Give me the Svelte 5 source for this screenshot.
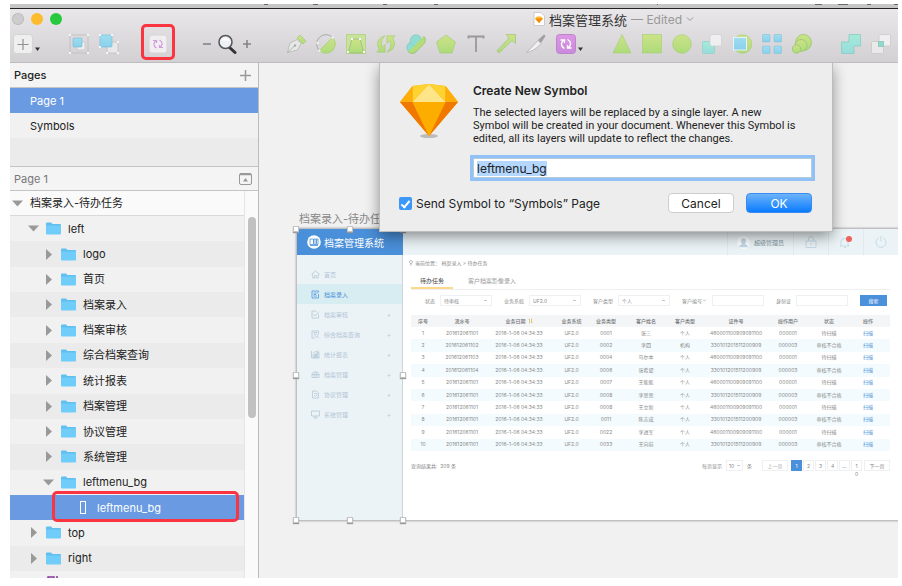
<script>
  import { onMount } from 'svelte';

  let nameInput;
  let symbolName = 'leftmenu_bg';
  let sendToPage = true;

  const layers = [
    { name: 'left', depth: 1, open: true },
    { name: 'logo', depth: 2 },
    { name: '首页', depth: 2 },
    { name: '档案录入', depth: 2 },
    { name: '档案审核', depth: 2 },
    { name: '综合档案查询', depth: 2 },
    { name: '统计报表', depth: 2 },
    { name: '档案管理', depth: 2 },
    { name: '协议管理', depth: 2 },
    { name: '系统管理', depth: 2 },
    { name: 'leftmenu_bg', depth: 2, open: true },
    { name: 'leftmenu_bg', depth: 3, shape: true },
    { name: 'top', depth: 1 },
    { name: 'right', depth: 1 }
  ];

  const menu = [
    { name: '首页', icon: 'M1 8.5 9 2l8 6.5M3.500 7.500V16h4v-5h3v5h4V7.500' },
    { name: '档案录入', icon: 'M15 8v8H2V2h13M5 6h6M5 9h5M5 12h7M12 7l4-5', active: true },
    { name: '档案审核', icon: 'M15 8v8H2V2h9M5 8l3 4 8-9', more: true },
    { name: '综合档案查询', icon: 'M15 8V2H2v14h6M5 5h7M5 8h3M11 8a3 3 0 1 0 .1 0M13 13l3 3', more: true },
    { name: '统计报表', icon: 'M1 2v14h16M4 16V9h3v7M9 16V7h2v9M13 16V5h3v11M4 6l5-3 3 1 4-3', more: true },
    { name: '档案管理', icon: 'M2 15V8l3-4h8l3 4v7zM2 9h14M6 6h6M6 9v3h6V9', more: true },
    { name: '协议管理', icon: 'M3 2h8l4 4v10H3zM6 7h6M6 10l3 3 4-5', more: true },
    { name: '系统管理', icon: 'M1 2h16v10H1zM9 12v4M5 16h8', more: true }
  ];

  const headers = ['序号', '流水号', '业务日期', '业务系统', '业务类型', '客户姓名', '客户类型', '证件号', '操作用户', '状态', '操作'];
  const widths = [24, 54, 60, 45, 24, 56, 22, 80, 24, 58, 32];
  const total = widths.reduce((a, b) => a + b, 0);

  const records = [
    ['201612061101', '0001', '张三', '个人'],
    ['201612061102', '0002', '李四', '机构'],
    ['201612061103', '0004', '马尔本', '个人'],
    ['201612061104', '0006', '张希望', '个人'],
    ['201612061101', '0007', '王能能', '个人'],
    ['201612061101', '0008', '李思思', '个人'],
    ['201612061101', '0008', '王立新', '个人'],
    ['201612061101', '0011', '陈志成', '个人'],
    ['201612061101', '0022', '李进军', '个人'],
    ['201612061101', '0033', '王向前', '个人']
  ];

  onMount(() => {
    nameInput.focus({ preventScroll: true });
    nameInput.select();
  });
</script>

<svg class="defs" width="0" height="0" aria-hidden="true">
  <defs>
    <linearGradient id="lime" x1="0" y1="0" x2="0" y2="1"><stop offset="0" stop-color="#cce388" /><stop offset="1" stop-color="#addb7a" /></linearGradient>
    <linearGradient id="teal" x1="0" y1="0" x2="0" y2="1"><stop offset="0" stop-color="#a5ead8" /><stop offset="1" stop-color="#98dcdc" /></linearGradient>
    <linearGradient id="sky" x1="0" y1="0" x2="0" y2="1"><stop offset="0" stop-color="#a0def0" /><stop offset="1" stop-color="#8acfec" /></linearGradient>
    <linearGradient id="violet" x1="0" y1="0" x2="0" y2="1"><stop offset="0" stop-color="#dd98e4" /><stop offset="1" stop-color="#c98adb" /></linearGradient>
    <clipPath id="lower-half"><path d="M20 0v20H0z" /></clipPath>
  </defs>
</svg>

<div class="screen">
  <div class="menubar">
    <svg width="888" height="4" viewBox="0 0 888 4" aria-hidden="true">
      <path fill="#444" d="M254 0h4v1h-4zM303 0h5v1h-5zM373 0h4v1h-4zM424 0h4v1h-4zM647 0h1v1h-1zM805 0h7v1h-7zM828 0h10v1h-10zM857 0h4v1h-4zM884 0h4v1h-4z" opacity=".7" />
    </svg>
  </div>

  <header class="chrome">
    <div class="titlebar">
      <div class="lights"><i></i><i class="amber"></i><i class="green"></i></div>
      <div class="title">
        <svg width="12" height="14" viewBox="0 0 12 14"><path d="M1 .5h7l3.500 3.500v9.500H1z" fill="#fff" stroke="#ccc" /><path d="M2 6.500 4 4.500h4l2 2L6 11z" fill="#fdb92c" /><path d="M2 6.500h8L6 11z" fill="#f38a0c" /></svg>
        <strong>档案管理系统</strong>
        <span class="edited">— Edited</span>
        <svg width="8" height="6" viewBox="0 0 8 6"><path d="M1 1.500 4 4.500 7 1.500" fill="none" stroke="#999" /></svg>
      </div>
    </div>

    <div class="toolbar">
      <div class="group tight">
        <button class="tool" aria-label="Insert"><svg viewBox="0 0 20 20"><rect x=".5" y=".5" width="19" height="19" rx="3" fill="#efefef" stroke="#d4d4d4" /><path d="M10 5v11M4.500 10.500h11" stroke="#909090" stroke-width="1.200" /></svg></button>
        <svg class="caret" viewBox="0 0 8 20"><path d="M2 13.500h5L4.500 17z" fill="#333" /></svg>
      </div>
      <div class="group select">
        <button class="tool" aria-label="Group"><svg viewBox="0 0 20 20"><rect x="1" y="1" width="18" height="18" fill="none" stroke="#c2c2c2" /><rect x="8" y="8" width="8" height="8" rx="1" fill="#eee" stroke="#ccc" /><rect x="4" y="4" width="9" height="9" rx="1" fill="url(#sky)" stroke="#73bcd6" stroke-width=".6" /><path d="M0 0h2v2H0zM18 0h2v2h-2zM0 18h2v2H0zM18 18h2v2h-2z" fill="#f6f6f6" /></svg></button>
        <button class="tool" aria-label="Ungroup"><svg viewBox="0 0 20 20"><rect x="8" y="8" width="11" height="11" rx="1" fill="#e8e8e8" stroke="#c6c6c6" /><rect x="1" y="1" width="12" height="12" rx="1" fill="url(#sky)" stroke="#73bcd6" stroke-width=".6" /><path d="M0 0h2v2H0zM12 0h2v2h-2zM0 12h2v2H0zM18 7h2v2h-2zM7 18h2v2H7zM18 18h2v2h-2z" fill="#f6f6f6" /></svg></button>
      </div>
      <div class="group symbol">
        <button class="tool" aria-label="Create Symbol"><svg viewBox="0 0 20 20"><rect x="1" y="1" width="18" height="18" rx="3" fill="#f0eef0" stroke="#d8d4d8" /><g fill="none" stroke="#d19bdd" stroke-width="1.200"><path d="M8.500 6.500C5 8.500 5 12 8.500 14M5 6.500h3.500V9M11.500 6C15 8 15 11.500 11.500 13.500M15 13.500h-3.500V11" /></g></svg></button>
        <span class="mark"></span>
      </div>
      <div class="group zoom">
        <svg class="small" viewBox="0 0 8 20"><path d="M0 10h8" stroke="#858585" stroke-width="1.600" /></svg>
        <button class="tool" aria-label="Zoom"><svg viewBox="0 0 20 20"><path d="m12 13 6 5.500" stroke="#333" stroke-width="3" stroke-linecap="round" /><circle cx="8.500" cy="8" r="6.500" fill="#edf0f5" stroke="#555" stroke-width="1.500" /><path d="M4 6.500a5 5 0 0 1 9 0z" fill="#fff" /></svg></button>
        <svg class="small" viewBox="0 0 8 20"><path d="M0 10h8M4 6v8" stroke="#858585" stroke-width="1.600" /></svg>
      </div>
      <div class="group draw">
        <button class="tool" aria-label="Vector"><svg viewBox="0 0 20 20"><path d="M1.500 18.500 4 9l7-3.500 4 4L11.500 16z" fill="#e6e8e6" stroke="#b4b8b4" stroke-width=".8" /><path d="m1.500 18.500 7-6.500" stroke="#a5a8a5" stroke-width=".8" /><circle cx="9" cy="11.500" r="1.200" fill="#aaa" /><path d="m11 4 3-3 6 6-3 3z" fill="url(#lime)" stroke="#9fc06e" stroke-width=".6" /></svg></button>
        <button class="tool" aria-label="Scissors"><svg viewBox="0 0 20 20"><path d="M3.400 16.600A9.300 9.300 0 0 1 16.600 3.400" fill="none" stroke="#aaa" /><path d="M3.400 16.600 16.600 3.400A9.300 9.300 0 0 1 3.400 16.600z" fill="url(#lime)" stroke="#9fc76f" stroke-width=".6" /><circle cx="3.400" cy="16.600" r="1.200" fill="#f4f4f4" /><circle cx="16.600" cy="3.400" r="1.200" fill="#f4f4f4" /><circle cx="1.500" cy="9" r="1.200" fill="#f4f4f4" /></svg></button>
        <button class="tool" aria-label="Transform"><svg viewBox="0 0 20 20"><rect x=".5" y=".5" width="19" height="19" fill="#c9e29c" stroke="#b5d58c" /><path d="M6 5h8l4 14H2z" fill="url(#lime)" stroke="#98b879" stroke-width=".7" /><path d="M5 4h2v2H5zM13 4h2v2h-2zM1 17h2v2H1zM17 17h2v2h-2z" fill="#f6f6f6" /></svg></button>
        <button class="tool" aria-label="Rotate"><svg viewBox="0 0 22 19"><path d="M10 .5C3 2 -1 9 3.500 15.500L1 18.500h9V10l-3 3C5 8.500 6 4 10 .5zM12 18.500c7-1.500 11-8.500 6.500-15L21 .5h-9V9l3-3c2 4.500 1 9-3 12.500z" fill="url(#lime)" stroke="#9fc76f" stroke-width=".6" /></svg></button>
        <button class="tool" aria-label="Flatten"><svg viewBox="0 0 20 20"><g fill="#8fdcd2" stroke="#79c3bb" stroke-width=".6"><circle cx="6.500" cy="13.500" r="5.700" /><circle cx="10" cy="6.500" r="5.700" /></g><circle cx="10" cy="7" r="5.200" fill="#8fdcd2" /><g clip-path="url(#lower-half)"><path d="M7 19 19.500 6.500" stroke="#98c872" stroke-width="0" /><rect x="-1" y="4.500" width="22" height="11" rx="5.500" fill="#b5dc78" stroke="#92c270" stroke-width=".7" transform="rotate(-45 10 10)" /></g></svg></button>
        <button class="tool" aria-label="Polygon"><svg viewBox="0 0 20 20"><path d="m10 1 9.500 7-3.500 11H4L.5 8z" fill="url(#lime)" stroke="#9fc76f" stroke-width=".6" /></svg></button>
        <button class="tool" aria-label="Text"><svg viewBox="0 0 20 20"><path d="M2.500 4.500v-2h15v2M10 2.500V18" fill="none" stroke="#999" stroke-width="1.800" /></svg></button>
        <button class="tool" aria-label="Arrow"><svg viewBox="0 0 20 20"><path d="M19.500.5v9L16 6.500 3 19 .8 17 13 4 10 .5z" fill="url(#lime)" stroke="#9cbd77" stroke-width=".6" /></svg></button>
        <button class="tool" aria-label="Slice"><svg viewBox="0 0 20 20"><path d="M.5 18.500 12 6.500l3 3Q9 17 .5 18.500z" fill="#f0f0f0" stroke="#aaa" stroke-width=".7" /><path d="m12 6 6-5.500L19.500 2 15 9z" fill="#a0a0a0" /></svg></button>
        <button class="tool" aria-label="Symbols"><svg viewBox="0 0 20 20"><rect x=".5" y=".5" width="19" height="19" rx="3" fill="url(#violet)" stroke="#bf83cc" /><g fill="none" stroke="#fff" stroke-width="1.300"><path d="M8.500 6C4.500 8 4.500 12.500 8.500 14.500M4.500 6h4v3M11.500 5.500c4 2 4 6.500 0 8.500M15.500 14h-4v-3" /></g></svg></button>
      </div>
      <svg class="caret" viewBox="0 0 8 20"><path d="M2 13.500h5L4.500 17z" fill="#333" /></svg>
      <div class="group shapes">
        <button class="tool" aria-label="Triangle"><svg viewBox="0 0 20 20"><path d="m10 .5 9 18.500H1z" fill="url(#lime)" stroke="#a4cd76" stroke-width=".6" /></svg></button>
        <button class="tool" aria-label="Rectangle"><svg viewBox="0 0 20 20"><rect x=".5" y=".5" width="19" height="18.500" fill="url(#lime)" stroke="#a4cd76" stroke-width=".6" /></svg></button>
        <button class="tool" aria-label="Oval"><svg viewBox="0 0 20 20"><circle cx="10" cy="10" r="9.300" fill="url(#lime)" stroke="#a4cd76" stroke-width=".6" /></svg></button>
        <button class="tool" aria-label="Backward"><svg viewBox="0 0 20 20"><rect x=".5" y="7.500" width="12" height="12" rx="1" fill="url(#teal)" stroke="#8accc4" stroke-width=".6" /><rect x="8" y=".5" width="11.500" height="11.500" rx="2" fill="#efefef" stroke="#d2d2d2" stroke-width=".8" /></svg></button>
        <button class="tool" aria-label="Mask"><svg viewBox="0 0 20 20"><circle cx="10.500" cy="10" r="9.300" fill="url(#lime)" stroke="#a4cd76" stroke-width=".6" /><rect x="1.500" y="3.500" width="13" height="12.500" fill="url(#sky)" stroke="#e6f2f5" /></svg></button>
        <button class="tool" aria-label="Grid"><svg viewBox="0 0 20 20"><g fill="url(#sky)" stroke="#7fc1da" stroke-width=".6"><rect x=".5" y=".5" width="7.500" height="7.500" rx="1" /><rect x="12" y=".5" width="7.500" height="7.500" rx="1" /><rect x=".5" y="12" width="7.500" height="7.500" rx="1" /><rect x="12" y="12" width="7.500" height="7.500" rx="1" /></g></svg></button>
        <button class="tool" aria-label="Copies"><svg viewBox="0 0 20 20"><g fill="url(#lime)" stroke="#99c470" stroke-width=".8"><circle cx="11.500" cy="8.500" r="8" /><circle cx="9" cy="11.500" r="6" /><circle cx="4.500" cy="15" r="4.200" /></g></svg></button>
      </div>
      <div class="group boolean">
        <button class="tool" aria-label="Union"><svg viewBox="0 0 20 20"><path d="M8 .5h11.500V12H13v7.500H.5V8H8z" fill="url(#teal)" stroke="#82cabd" stroke-width=".7" /></svg></button>
        <button class="tool" aria-label="Intersect"><svg viewBox="0 0 20 20"><rect x=".5" y="7.500" width="12" height="12" rx="1" fill="#e9e9e9" stroke="#ccc" /><rect x="8" y=".5" width="11.500" height="11.500" rx="1" fill="#efefef" stroke="#d0d0d0" /><rect x="7.500" y="7.500" width="5" height="5" fill="#93d8cc" stroke="#7cc6b8" stroke-width=".7" /></svg></button>
      </div>
    </div>
  </header>

  <div class="work">
    <aside class="sidebar">
      <div class="pages-head"><span>Pages</span>
        <svg width="11" height="11" viewBox="0 0 11 11"><path d="M5.500 0v11M0 5.500h11" stroke="#999" stroke-width="1.500" /></svg>
      </div>
      <div class="page current">Page 1</div>
      <div class="page">Symbols</div>
      <div class="pages-rest"></div>
      <div class="layers-head"><span>Page 1</span>
        <svg width="13" height="12" viewBox="0 0 13 12"><rect x=".5" y=".5" width="12" height="11" rx="1.500" fill="none" stroke="#999" /><path d="M1 1.500h11" stroke="#999" stroke-width="1.500" /><path d="M6.500 5 9 8.500H4z" fill="#999" /></svg>
      </div>
      <div class="list">
        <div class="rows">
          <div class="row artboard-row">
            <svg class="arrow" viewBox="0 0 11 11"><path d="M0 2.500h11L5.500 8.500z" fill="#999" /></svg>
            <span>档案录入-待办任务</span>
          </div>
          {#each layers as layer}
            <div class="row d{layer.depth}" class:selected={layer.shape}>
              {#if layer.shape}
                <svg class="shape" viewBox="0 0 6 14"><rect x=".5" y=".5" width="5" height="12" fill="none" stroke="#fff" /></svg>
              {:else}
                <svg class="arrow" viewBox="0 0 11 11">
                  {#if layer.open}
                    <path d="M0 2.500h11L5.500 8.500z" fill="#999" />
                  {:else}
                    <path d="M3 0v11L9 5.500z" fill="#999" />
                  {/if}
                </svg>
                <svg class="folder" viewBox="0 0 15 13"><path d="M0 1.500Q0 .5 1 .5h4l1.500 1.500H14q1 0 1 1V12H0z" fill="#5fbfee" /><path d="M0 3.500h15v8q0 1-1 1H1q-1 0-1-1z" fill="#70cdf9" /></svg>
              {/if}
              <span>{layer.name}</span>
              {#if layer.shape}<i class="mark"></i>{/if}
            </div>
          {/each}
          <div class="row cut"><svg width="12" height="12" viewBox="0 0 12 12"><path d="M1 12V1h6v11M10 0v12" fill="none" stroke="#84399b" stroke-width="1.500" /></svg></div>
        </div>
        <div class="track"><div class="thumb"></div></div>
      </div>
    </aside>

    <main class="canvas">
      <div class="artboard-name">档案录入-待办任务</div>
      <div class="artboard">
        <nav class="leftmenu">
          <div class="logo">
            <svg width="14" height="14" viewBox="0 0 14 14"><circle cx="7" cy="7" r="6.800" fill="#fff" /><path d="M3 4h3.500v5.500H3zM7 4h2v5.500H7zM9.500 4H11v5.500H9.500zM3 10.500h8" fill="none" stroke="#4a90d9" stroke-width=".8" /></svg>
            <span>档案管理系统</span>
          </div>
          <div class="items">
            {#each menu as item}
              <a href="#menu" class:active={item.active}>
                <svg viewBox="0 0 18 18"><path d={item.icon} fill="none" stroke="currentColor" stroke-width="1.500" /></svg>
                <span>{item.name}</span>
                {#if item.more}<b>+</b>{/if}
              </a>
            {/each}
          </div>
          <div class="handles">
            <i class="t l"></i><i class="t c"></i><i class="t r"></i>
            <i class="m l"></i><i class="m r"></i>
            <i class="b l"></i><i class="b c"></i><i class="b r"></i>
          </div>
        </nav>

        <section class="content">
          <div class="topbar">
            <div class="user">
              <svg width="13" height="13" viewBox="0 0 14 14"><circle cx="7" cy="7" r="7" fill="#fbfdfe" /><path d="M7 2.500c4 0 2.500 5 1.500 6l3 2v1.500h-9v-1.500l3-2C4.500 7.500 3 2.500 7 2.500z" fill="#c3d9e9" /></svg>
              <span>超级管理员</span>
            </div>
            <div class="cell"><svg viewBox="0 0 12 12"><path d="M1 5h10v6.500H1zM3.500 5V3a2.500 2.500 0 0 1 5 0v2M6 7v2.500" fill="none" stroke="#c5d9e6" /></svg></div>
            <div class="cell"><svg viewBox="0 0 12 12"><path d="M0 10h9L8 8.500V6a3.500 3.500 0 0 0-7 0v2.500zM4 11.500h2" fill="none" stroke="#c5d9e6" /><circle cx="9" cy="3" r="3" fill="#f0605c" /></svg></div>
            <div class="cell"><svg viewBox="0 0 12 12"><path d="M3.500 2a5 5 0 1 0 5 0M6 0v5.500" fill="none" stroke="#c5d9e6" /></svg></div>
          </div>

          <div class="page-body">
            <div class="crumb">
              <svg width="4" height="6" viewBox="0 0 8 12"><path d="M4 1a3 3 0 1 0 .1 0M4 7v4" fill="none" stroke="#999" stroke-width="1.500" /></svg>
              <span>当前位置： 档案录入 &gt; 待办任务</span>
            </div>
            <div class="tabs">
              <a href="#todo" class="on">待办任务</a>
              <a href="#image">客户档案影像录入</a>
            </div>

            <form class="filters">
              <label>状态<select><option>待审核</option></select></label>
              <label>业务系统<select><option>UF2.0</option></select></label>
              <label>客户类型<select><option>个人</option></select></label>
              <label><span>客户编号<svg width="5" height="3" viewBox="0 0 10 6"><path d="m2 1 3 3 3-3" fill="none" stroke="#888" /></svg></span><input type="text" /></label>
              <label>身份证<input type="text" /></label>
              <button type="button">搜索</button>
            </form>

            <table>
              <colgroup>
                {#each widths as w}<col style="width: {(w / total) * 100}%" />{/each}
              </colgroup>
              <thead>
                <tr>
                  {#each headers as h}
                    <th>{h}{#if h === '业务日期'}<svg width="5" height="6" viewBox="0 0 10 12"><path d="M3 11V2L1 4" fill="none" stroke="#bbb" stroke-width="1.500" /><path d="M7 1v9l2-2" fill="none" stroke="#f8c33c" stroke-width="2" /></svg>{/if}</th>
                  {/each}
                </tr>
              </thead>
              <tbody>
                {#each records as [serial, type, customer, kind], i}
                  <tr>
                    <td>{i + 1}</td>
                    <td>{serial}</td>
                    <td>2016-1-06 04:34:33</td>
                    <td>UF2.0</td>
                    <td>{type}</td>
                    <td>{customer}</td>
                    <td>{kind}</td>
                    <td>{i % 2 ? '330101201511200909' : '460001100909091100'}</td>
                    <td>{i % 2 ? '000003' : '000001'}</td>
                    <td>{i % 2 ? '审核不合格' : '待扫描'}</td>
                    <td><a href="#scan">扫描</a></td>
                  </tr>
                {/each}
              </tbody>
            </table>

            <div class="footer">
              <span>查询结果共: &nbsp;209 条</span>
              <div class="pager">
                <label>每页显示<select class="size"><option>10</option></select>条</label>
                <div class="nums">
                  <button class="word dim">上一页</button>
                  <button class="on">1</button>
                  <button>2</button>
                  <button>3</button>
                  <button>4</button>
                  <button>...</button>
                  <button class="last">10</button>
                  <button class="word">下一页</button>
                </div>
              </div>
            </div>
          </div>
        </section>
      </div>

      <div class="dialog" role="dialog" aria-labelledby="dialog-title">
        <svg class="gem" viewBox="0 0 58 56">
          <ellipse cx="29" cy="53" rx="9" ry="2" fill="#bbb" />
          <path d="M12.500 3 29 1l16.500 2L58 19 29 53 0 19z" fill="#fdad00" />
          <path d="M0 19h12.500L29 53z" fill="#f07800" />
          <path d="M58 19H45.500L29 53z" fill="#f07800" />
          <path d="M12.500 19h33L29 53z" fill="#fdad00" />
          <path d="m29 1 16.500 18h-33z" fill="#fee58a" />
          <path d="M12.500 3 29 1 12.500 19zM45.500 3 29 1l16.500 18z" fill="#fdd231" />
          <path d="M12.500 3v16H0zM45.500 3v16H58z" fill="#feae0a" />
        </svg>
        <div class="words">
          <h1 id="dialog-title">Create New Symbol</h1>
          <p>The selected layers will be replaced by a single layer. A new<br />Symbol will be created in your document. Whenever this Symbol is<br />edited, all its layers will update to reflect the changes.</p>
          <input type="text" aria-label="Symbol name" bind:this={nameInput} bind:value={symbolName} />
        </div>
        <div class="actions">
          <label><input type="checkbox" bind:checked={sendToPage} />Send Symbol to “Symbols” Page</label>
          <button>Cancel</button>
          <button class="primary">OK</button>
        </div>
      </div>
    </main>
  </div>
</div>

<style>
  :global(body) {
    background: #fff;
  }
  .defs {
    position: absolute;
  }
  .screen {
    box-sizing: border-box;
    height: 100vh;
    padding: 4px 4px 8px 10px;
    display: flex;
    flex-direction: column;
    overflow: hidden;
    font-family: Inter, 'Noto Sans CJK SC', sans-serif;
    font-size: 11px;
    color: #222;
  }
  svg {
    display: block;
    flex: none;
  }
  button,
  input,
  select {
    font-family: inherit;
    margin: 0;
    box-sizing: border-box;
  }
  a {
    text-decoration: none;
  }
  .menubar {
    height: 4px;
    background: #c6c6c6;
    border-bottom: 1px solid #222;
    overflow: hidden;
    flex: none;
  }

  /* window chrome */
  .chrome {
    flex: none;
    background: linear-gradient(#e9e7e9, #d2d0d2);
    border-bottom: 1px solid #bdbdbd;
  }
  .titlebar {
    display: flex;
    align-items: center;
    height: 20px;
    padding-left: 2px;
  }
  .lights {
    display: flex;
    gap: 7px;
    width: 521px;
    flex: none;
  }
  .lights i {
    width: 12px;
    height: 12px;
    border-radius: 50%;
    background: #cecdce;
    box-shadow: inset 0 0 0 1px #bfbebf;
  }
  .lights .amber {
    background: #fdbc2e;
    box-shadow: none;
  }
  .lights .green {
    background: #27c93f;
    box-shadow: none;
  }
  .title {
    display: flex;
    align-items: center;
    gap: 4px;
    font-size: 12px;
    white-space: nowrap;
  }
  .title strong {
    font-weight: 400;
    font-size: 13px;
    color: #333;
  }
  .edited {
    color: #999;
  }
  .toolbar {
    display: flex;
    align-items: flex-start;
    box-sizing: border-box;
    height: 33px;
    padding: 5px 0 0 3px;
  }
  .group {
    display: flex;
    gap: 10px;
    position: relative;
    flex: none;
  }
  .tight {
    gap: 0;
  }
  .tool {
    width: 20px;
    height: 20px;
    padding: 0;
    border: 0;
    background: none;
  }
  .tool svg {
    width: 20px;
    height: 20px;
  }
  .caret,
  .small {
    width: 8px;
    height: 20px;
  }
  .select,
  .shapes {
    margin-left: 28px;
  }
  .symbol,
  .boolean {
    margin-left: 29px;
  }
  .zoom {
    margin-left: 35px;
    gap: 6px;
  }
  .draw {
    margin-left: 35px;
  }
  .mark {
    position: absolute;
    border: 3px solid #fa3440;
    border-radius: 5px;
    pointer-events: none;
  }
  .symbol .mark {
    inset: -10px -7px -6px;
    z-index: 2;
  }

  .work {
    flex: 1;
    min-height: 0;
    display: flex;
  }

  /* pages and layers */
  .sidebar {
    width: 248px;
    flex: none;
    display: flex;
    flex-direction: column;
    background: #ebebeb;
    border-right: 1px solid #bcbcbc;
  }
  .pages-head,
  .layers-head {
    display: flex;
    align-items: center;
    justify-content: space-between;
    height: 24px;
    flex: none;
    padding: 0 6px 0 4px;
    background: #f4f4f4;
    border-bottom: 1px solid #c4c4c4;
  }
  .pages-head {
    font-weight: 500;
    padding-right: 7px;
  }
  .layers-head {
    border-top: 1px solid #c4c4c4;
    height: 23px;
    color: #777;
  }
  .page {
    height: 25px;
    flex: none;
    line-height: 27px;
    padding-left: 20px;
    background: #f1f1f1;
  }
  .page.current {
    background: #6a9be2;
    color: #fff;
  }
  .pages-rest {
    height: 28px;
    flex: none;
  }
  .list {
    flex: 1;
    min-height: 0;
    display: flex;
  }
  .rows {
    flex: 1;
    display: flex;
    flex-direction: column;
    overflow: hidden;
  }
  .row {
    flex: 1 1 0;
    display: flex;
    align-items: center;
    position: relative;
    background: #f1f1f1;
    line-height: 16px;
    white-space: nowrap;
  }
  .row:nth-child(odd) {
    background: #ebebeb;
  }
  .artboard-row.row {
    flex: none;
    height: 24px;
    background: #fafafa;
    border-bottom: 1px solid #dadada;
    padding-left: 2px;
  }
  .arrow {
    width: 11px;
    height: 11px;
    margin-right: 7px;
  }
  .folder {
    width: 15px;
    height: 13px;
    margin-right: 7px;
  }
  .d1 {
    padding-left: 18px;
  }
  .d2 {
    padding-left: 33px;
  }
  .row.selected {
    padding-left: 70px;
    background: #6a9be2;
    color: #fff;
    z-index: 1;
  }
  .shape {
    width: 6px;
    height: 14px;
    margin-right: 11px;
  }
  .row .mark {
    inset: -4px 5px -2px 42px;
  }
  .row.cut {
    flex: none;
    height: 7px;
    overflow: hidden;
    align-items: flex-start;
    padding: 5px 0 0 37px;
    box-sizing: border-box;
    background: #f1f1f1;
  }
  .track {
    width: 14px;
    background: #fafafa;
    border-left: 1px solid #e4e4e4;
    box-sizing: border-box;
  }
  .thumb {
    width: 8px;
    height: 52%;
    margin: 26px auto 0 3px;
    border-radius: 4px;
    background: #c1c1c1;
  }

  /* canvas */
  .canvas {
    flex: 1;
    min-width: 0;
    position: relative;
    background: #f1f1f1;
    padding: 149px 0 0 38px;
    overflow: hidden;
  }
  .artboard-name {
    line-height: 14px;
    margin: 0 0 3px 2px;
    color: #888;
  }
  .artboard {
    display: flex;
    min-height: 291px;
    background: #fff;
    box-shadow: 0 0 2px 1px #a9a9a9;
    color: #888;
    font-size: 5px;
  }
  .leftmenu {
    position: relative;
    width: 106px;
    flex: none;
    box-sizing: border-box;
    background: #ebf3f6;
    border-right: 1px solid #ccd6da;
  }
  .logo {
    display: flex;
    align-items: center;
    gap: 3px;
    height: 26px;
    padding-left: 10px;
    margin-right: -1px;
    background: #4a8fd9;
    color: #fff;
    font-size: 10px;
  }
  .items {
    padding-top: 9px;
  }
  .items a {
    display: flex;
    align-items: center;
    gap: 4px;
    height: 20px;
    padding: 0 11px 0 14px;
    font-size: 6px;
    color: #b3c5d6;
  }
  .items a.active {
    background: #d8edf2;
    color: #4a90d9;
  }
  .items svg {
    width: 9px;
    height: 9px;
  }
  .items b {
    margin-left: auto;
    font-weight: 400;
  }
  .handles {
    position: absolute;
    inset: 0 -1px 0 -1px;
    pointer-events: none;
  }
  .handles i {
    position: absolute;
    width: 6px;
    height: 6px;
    margin: -3px;
    box-sizing: border-box;
    background: #fff;
    border: 1px solid #c2c2c2;
    box-shadow: 0 1px 1px #999;
  }
  .handles .t { top: 0; }
  .handles .m { top: 50%; }
  .handles .b { top: 100%; }
  .handles .l { left: 0; }
  .handles .c { left: 50%; }
  .handles .r { left: 100%; }

  .content {
    flex: 1;
    min-width: 0;
  }
  .topbar {
    display: flex;
    justify-content: flex-end;
    height: 26px;
    background: #ebf3f6;
  }
  .topbar > div {
    display: flex;
    align-items: center;
    justify-content: center;
    border-left: 1px solid #dfe9ee;
    box-sizing: border-box;
    width: 35px;
  }
  .topbar .user {
    width: 66px;
    gap: 4px;
    font-size: 6px;
    color: #8799a5;
  }
  .cell svg {
    width: 12px;
    height: 12px;
  }
  .page-body {
    padding: 4px 8px 0;
  }
  .crumb {
    display: flex;
    align-items: center;
    gap: 2px;
    line-height: 8px;
    margin-left: -2px;
  }
  .tabs {
    display: flex;
    border-bottom: 1px solid #f0f0f0;
    margin-bottom: 5px;
    font-size: 6px;
    line-height: 8px;
  }
  .tabs a {
    color: #999;
    padding: 10px 9px 2px;
    margin-left: 6px;
    border-bottom: 2px solid transparent;
  }
  .tabs a.on {
    color: #444;
    margin-left: 0;
    border-color: #fbd98a;
  }
  .filters {
    display: flex;
    gap: 12px;
    height: 11px;
    padding-left: 14px;
    white-space: nowrap;
  }
  label {
    display: flex;
    align-items: center;
    gap: 5px;
  }
  label span {
    display: flex;
    align-items: center;
  }
  .filters select,
  .filters input,
  .size {
    width: 52px;
    height: 11px;
    padding: 0 3px;
    border: 1px solid #eef0f1;
    border-radius: 0;
    font-size: 5px;
    color: #888;
    background: #fff;
    appearance: none;
  }
  .filters select,
  .size {
    background: linear-gradient(#c4c4c4, #c4c4c4) no-repeat right 4px center / 3px 1px #fff;
  }
  .filters button {
    width: 27px;
    height: 11px;
    padding: 0;
    border: 0;
    background: #4a90db;
    color: #fff;
    font-size: 5px;
  }
  table {
    width: 100%;
    height: 136px;
    margin-top: 9px;
    table-layout: fixed;
    border-collapse: collapse;
    line-height: 7px;
  }
  th,
  td {
    height: 12px;
    padding: 0;
    text-align: center;
    white-space: nowrap;
  }
  th {
    font-weight: 500;
    color: #777;
    background: #f3f5f7;
  }
  th svg {
    display: inline-block;
    margin-left: 2px;
    vertical-align: middle;
  }
  th:last-child,
  td:last-child {
    padding-right: 12px;
  }
  tbody tr:nth-child(even) {
    background: #f3fbfe;
  }
  td a {
    color: #4a90d9;
  }
  .footer {
    display: flex;
    justify-content: space-between;
    align-items: center;
    height: 11px;
    margin-top: 9px;
  }
  .pager {
    display: flex;
    gap: 10px;
  }
  .pager label {
    gap: 4px;
  }
  .size {
    width: 17px;
    padding: 0 2px;
    background-position: right 2px center;
  }
  .nums {
    display: flex;
    gap: 1px;
  }
  .nums button {
    width: 11px;
    height: 11px;
    padding: 2px 3px;
    border: 1px solid #eef0f1;
    background: #fff;
    color: #888;
    font-size: 5px;
    line-height: 6px;
    display: flex;
    justify-content: center;
  }
  .nums .word {
    width: 26px;
    white-space: nowrap;
  }
  .nums .dim {
    color: #aaa;
    margin-right: 2px;
  }
  .nums .on {
    background: #4a90db;
    border-color: #4a90db;
    color: #fff;
  }
  .nums .last {
    word-break: break-all;
    line-height: 8px;
    padding: 1px 3px;
    margin-right: 1px;
  }

  /* symbol sheet */
  .dialog {
    position: absolute;
    top: 0;
    left: 121px;
    width: 452px;
    box-sizing: border-box;
    padding: 20px 16px 18px 20px;
    display: grid;
    grid-template-columns: 58px 1fr;
    column-gap: 12px;
    background: #ededed;
    box-shadow: 0 0 0 1px #bdbdbd, 0 5px 14px rgba(0, 0, 0, 0.45);
    color: #222;
  }
  .gem {
    width: 58px;
    height: 56px;
  }
  .words {
    padding: 0 4px 0 3px;
  }
  h1 {
    margin: 0;
    font-size: 12px;
    line-height: 15px;
    font-weight: 600;
  }
  p {
    margin: 8px 0 13px;
    font-family: Roboto, sans-serif;
    font-size: 11px;
    line-height: 13px;
    white-space: nowrap;
  }
  .words input {
    display: block;
    width: 100%;
    height: 20px;
    padding: 0 3px;
    border: 1px solid #b5cbe2;
    outline: 0;
    box-shadow: 0 0 0 3px #92c1f5;
    font-size: 12px;
    background: #fff;
    color: #222;
  }
  .words input::selection {
    background: #b3d7ff;
    color: #222;
  }
  .actions {
    grid-column: 1 / -1;
    display: flex;
    align-items: center;
    gap: 12px;
    margin: 15px 4px 0 -1px;
  }
  .actions label {
    margin-right: auto;
    gap: 4px;
    font-size: 12px;
  }
  .actions input {
    appearance: none;
    width: 13px;
    height: 13px;
    border-radius: 2px;
    background: #3b97f8;
    display: grid;
    place-items: center;
  }
  .actions input:checked::after {
    content: '';
    width: 3px;
    height: 7px;
    border: solid #fff;
    border-width: 0 2px 2px 0;
    rotate: 40deg;
  }
  .actions button {
    width: 66px;
    height: 20px;
    padding: 0;
    border: 1px solid #cdcdcd;
    border-radius: 4px;
    background: #fff;
    font-size: 12px;
    color: #222;
  }
  .actions .primary {
    border-color: #3a8df0;
    background: linear-gradient(#6cb3fa, #0a7cff);
    color: #fff;
  }
</style>
